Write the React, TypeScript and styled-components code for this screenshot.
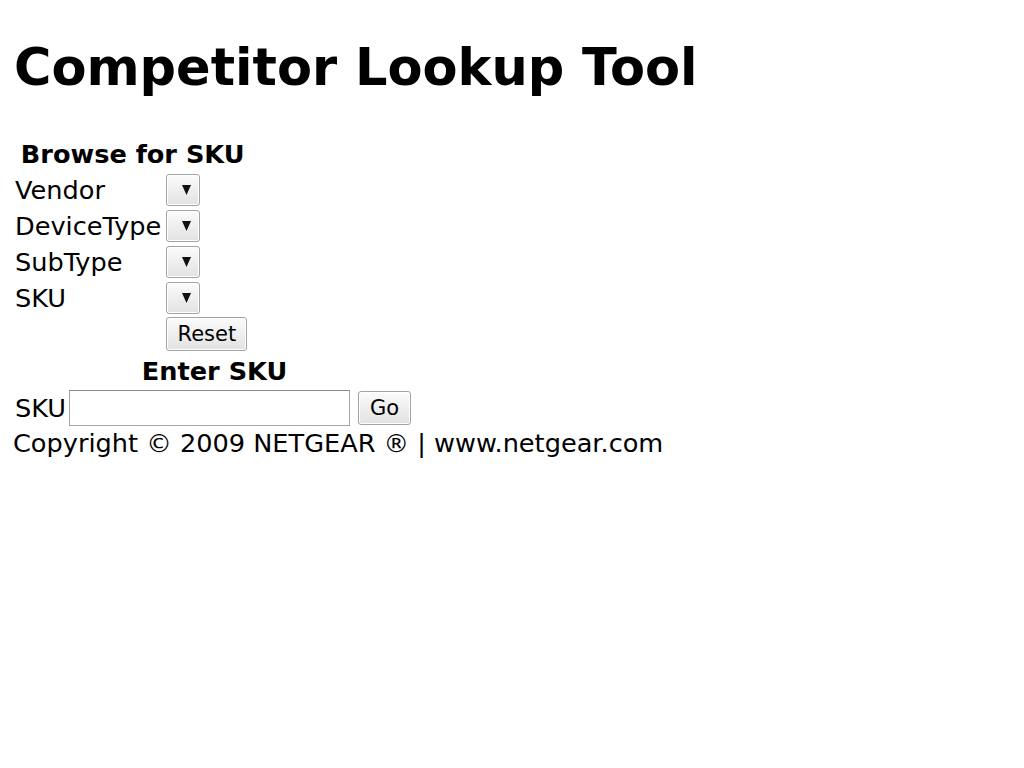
import React from "react";
import styled, { createGlobalStyle } from "styled-components";

const Global = createGlobalStyle`
  html, body { background: #fff; }
  body {
    margin: 0 12px;
    padding-top: 1px;
    font-family: "DejaVu Sans", "Liberation Sans", sans-serif;
    font-size: 25.6px;
    color: #000;
  }
`;

const Title = styled.h1`
  font-size: 51px;
  font-weight: bold;
  margin: 37px 0 41px 2px;
  line-height: 60px;
`;

const Page = styled.div`
  display: flex;
  flex-direction: column;
  align-items: flex-start;
`;

const Browse = styled.div`
  display: inline-grid;
  grid-template-columns: auto auto;
  column-gap: 5px;
  row-gap: 4px;
  align-items: center;
  justify-items: start;
`;

const Heading = styled.div`
  grid-column: 1 / -1;
  justify-self: center;
  font-weight: bold;
  line-height: 30px;
  margin: 0 0 1px 6px;
`;

const Label = styled.span`
  line-height: 30px;
  padding-left: 3px;
`;

const SelectWrap = styled.span`
  position: relative;
  display: inline-block;
  width: 34px;
  height: 32px;
`;

const NativeSelect = styled.select`
  appearance: none;
  -webkit-appearance: none;
  box-sizing: border-box;
  display: block;
  width: 34px;
  height: 32px;
  margin: 0;
  border: 1px solid #a3a3a3;
  border-radius: 3px;
  background: linear-gradient(#fbfbfb, #e2e2e2);
  box-shadow: inset 0 0 0 1px #fff;
`;

const Arrow = styled.svg`
  position: absolute;
  left: 16px;
  top: 11px;
  width: 9px;
  height: 10px;
  pointer-events: none;
`;

const Button = styled.button<{ $w: number }>`
  box-sizing: border-box;
  width: ${(p) => p.$w}px;
  height: 34px;
  margin: 0;
  padding: 0;
  border: 1px solid #a3a3a3;
  border-radius: 3px;
  background: linear-gradient(#fbfbfb, #e2e2e2);
  box-shadow: inset 0 0 0 1px #fff;
  font-family: "DejaVu Sans", sans-serif;
  font-size: 21px;
  color: #000;
`;

const ResetButton = styled(Button)`
  margin-top: -1px;
`;

const Enter = styled.div`
  display: inline-flex;
  flex-direction: column;
  align-items: stretch;
  margin-top: 5px;
`;

const EnterHeading = styled.div`
  text-align: center;
  font-weight: bold;
  line-height: 30px;
  margin: 0 0 4px 6px;
`;

const EnterRow = styled.div`
  display: flex;
  align-items: center;
`;

const TextInput = styled.input`
  box-sizing: border-box;
  width: 281px;
  height: 36px;
  margin: 0 8px 0 3px;
  border: 1px solid #a3a3a3;
  border-top-color: #8a8a8a;
  background: #fff;
`;

const Footer = styled.div`
  line-height: 30px;
  margin-top: 2px;
  margin-left: 1px;
`;

const fields = ["Vendor", "DeviceType", "SubType", "SKU"];

function Select({ label }: { label: string }) {
  return (
    <SelectWrap>
      <NativeSelect aria-label={label} />
      <Arrow viewBox="0 0 9 10">
        <polygon points="0,0 9,0 4.5,10" fill="#111" />
      </Arrow>
    </SelectWrap>
  );
}

export default function App() {
  return (
    <>
      <Global />
      <Title>Competitor Lookup Tool</Title>
      <Page>
        <Browse>
          <Heading>Browse for SKU</Heading>
          {fields.map((f) => (
            <React.Fragment key={f}>
              <Label>{f}</Label>
              <Select label={f} />
            </React.Fragment>
          ))}
          <span />
          <ResetButton $w={81}>Reset</ResetButton>
        </Browse>
        <Enter>
          <EnterHeading>Enter SKU</EnterHeading>
          <EnterRow>
            <Label>SKU</Label>
            <TextInput type="text" />
            <Button $w={53}>Go</Button>
          </EnterRow>
        </Enter>
        <Footer>Copyright © 2009 NETGEAR ® | www.netgear.com</Footer>
      </Page>
    </>
  );
}
